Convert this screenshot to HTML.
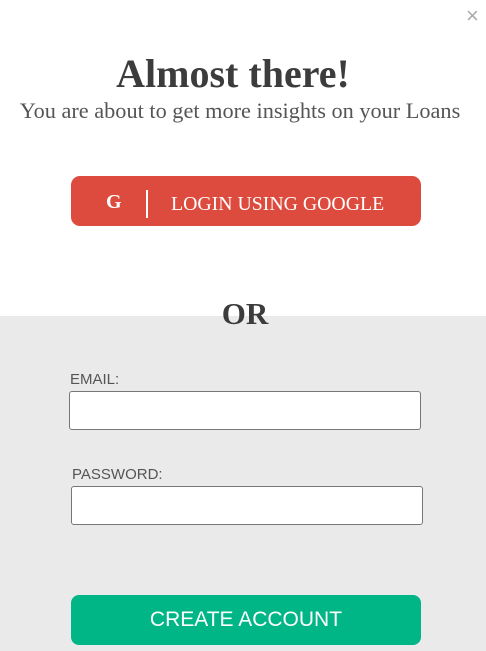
<!DOCTYPE html>
<html><head><style>
body{margin:0;width:486px;height:651px;position:relative;background:#fff;overflow:hidden;font-family:"Liberation Serif",serif}
.a{position:absolute}
</style></head><body>
<div class="a" style="left:466px;top:3px;font:22px 'Liberation Sans',sans-serif;color:#aaa">×</div>
<div class="a" style="left:0;width:466px;top:50px;text-align:center;font-weight:bold;font-size:40px;color:#3c3c3c">Almost there!</div>
<div class="a" style="left:0;width:480px;top:98px;text-align:center;font-size:22.3px;color:#555;white-space:nowrap">You are about to get more insights on your Loans</div>
<div class="a" style="left:71px;top:176px;width:350px;height:50px;background:#dd4b3e;border-radius:9px;color:#fff">
<div class="a" style="left:35px;top:15px;font-weight:bold;font-size:20px">G</div>
<div class="a" style="left:75px;top:14px;width:2px;height:28px;background:#fff"></div>
<div class="a" style="left:100px;top:17px;font-size:19.8px;white-space:nowrap">LOGIN USING GOOGLE</div>
</div>
<div class="a" style="left:0;top:316px;width:486px;height:335px;background:#eaeaea"></div>
<div class="a" style="left:0;width:490px;top:296px;text-align:center;font-weight:bold;font-size:31px;color:#3c3c3c">OR</div>
<div class="a" style="left:70px;top:371px;font:15px 'Liberation Sans',sans-serif;color:#555">EMAIL:</div>
<div class="a" style="left:69px;top:391px;width:350px;height:37px;background:#fff;border:1px solid #777;border-radius:3px"></div>
<div class="a" style="left:72px;top:466px;font:15px 'Liberation Sans',sans-serif;color:#555">PASSWORD:</div>
<div class="a" style="left:71px;top:486px;width:350px;height:37px;background:#fff;border:1px solid #777;border-radius:3px"></div>
<div class="a" style="left:71px;top:595px;width:350px;height:50px;background:#00b686;border-radius:8px;color:#fff;text-align:center;font:21px/50px 'Liberation Sans',sans-serif">CREATE ACCOUNT</div>
</body></html>
